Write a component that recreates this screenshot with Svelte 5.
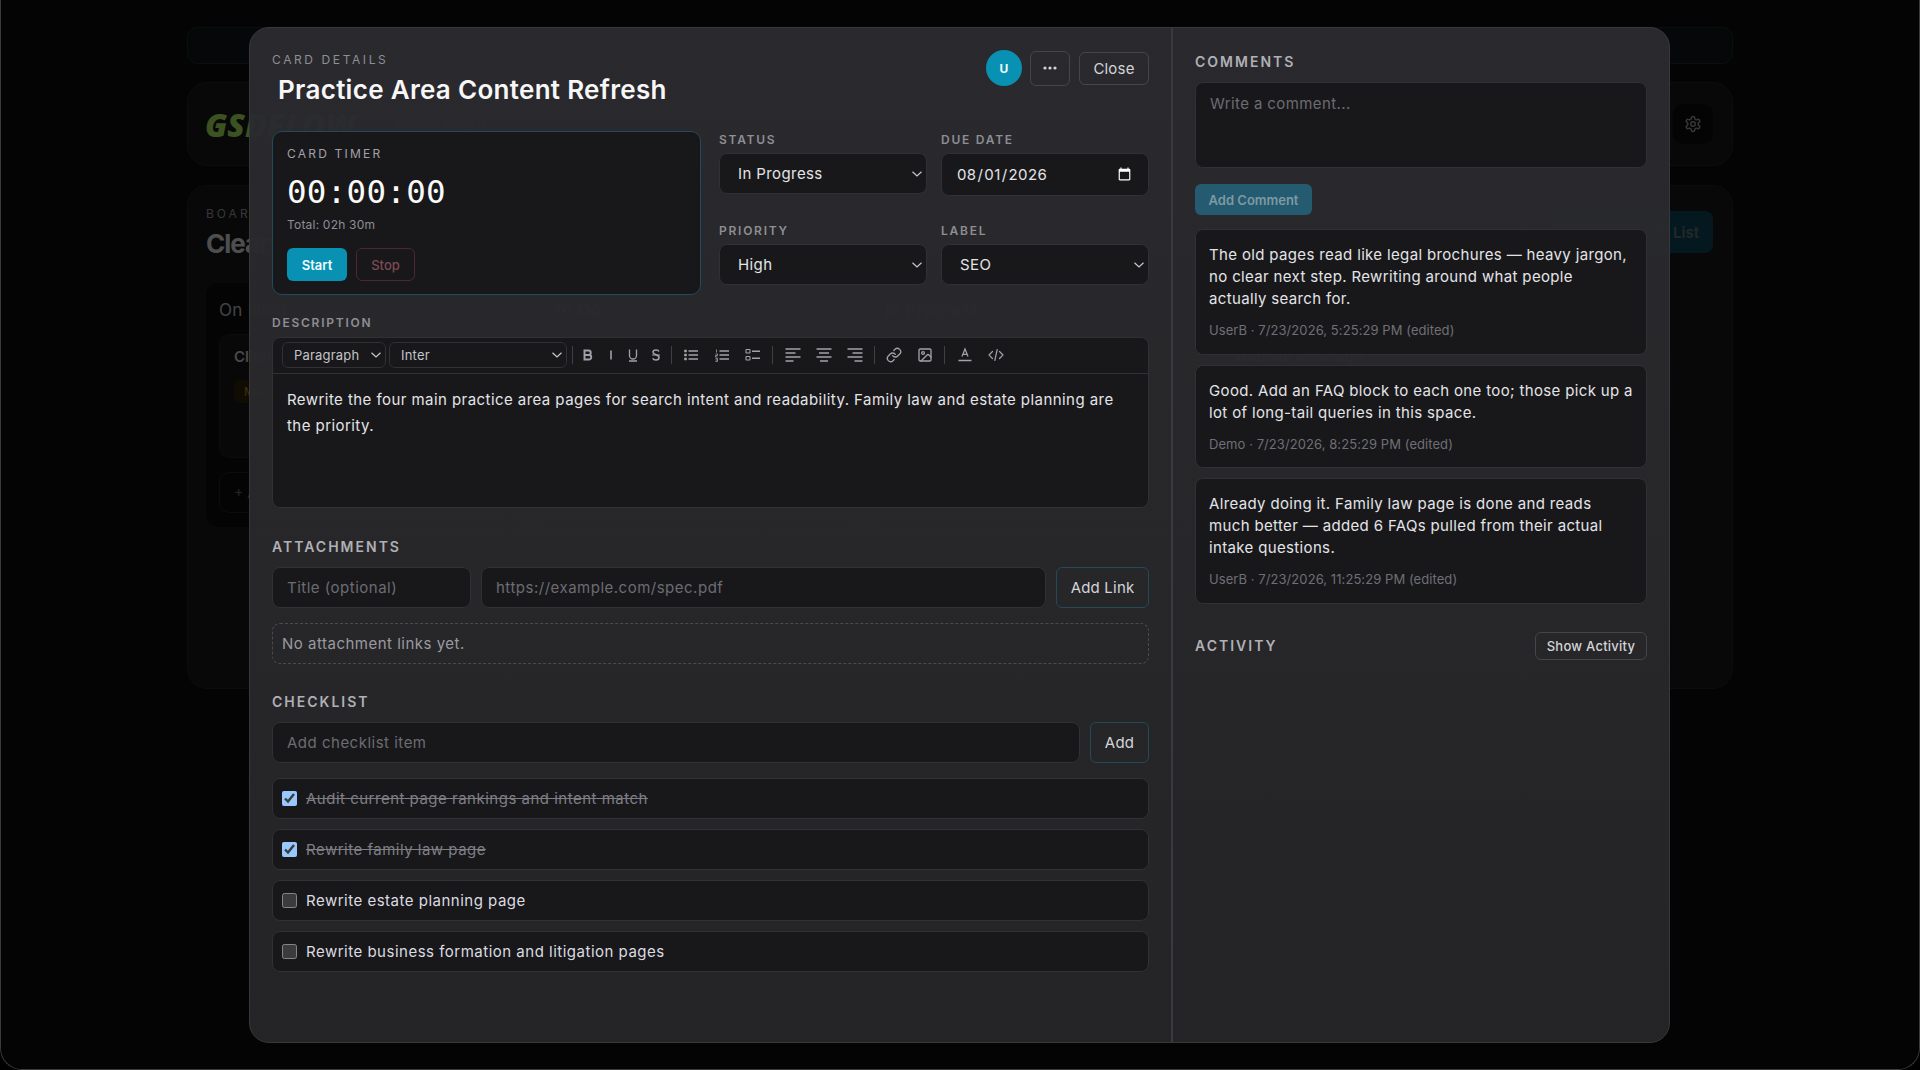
<script>
  const items = [
    { text: 'Audit current page rankings and intent match', done: true },
    { text: 'Rewrite family law page', done: true },
    { text: 'Rewrite estate planning page', done: false },
    { text: 'Rewrite business formation and litigation pages', done: false }
  ];
  const comments = [
    { text: 'The old pages read like legal brochures — heavy jargon, no clear next step. Rewriting around what people actually search for.', meta: 'UserB · 7/23/2026, 5:25:29 PM (edited)' },
    { text: 'Good. Add an FAQ block to each one too; those pick up a lot of long-tail queries in this space.', meta: 'Demo · 7/23/2026, 8:25:29 PM (edited)' },
    { text: 'Already doing it. Family law page is done and reads much better — added 6 FAQs pulled from their actual intake questions.', meta: 'UserB · 7/23/2026, 11:25:29 PM (edited)' }
  ];
  const columns = [
    { name: 'On Hold', cards: [{ title: 'Client Intake Forms', tag: 'Medium' }] },
    { name: 'To Do', cards: [{ title: 'Practice Area Content', tag: 'High' }] },
    { name: 'In Progress', cards: [{ title: 'Practice Area Content', tag: 'High' }] },
    { name: 'Done', cards: [{ title: 'Website Redesign', tag: 'Low' }] }
  ];
</script>

<div class="frame">
  <div class="page">
    <div class="banner"></div>
    <header class="topbar">
      <span class="logo">GSDFLOW</span>
      <span class="select-board">Select Board</span>
      <span class="gear">
        <svg width="18" height="18" viewBox="0 0 24 24" fill="none" stroke="currentColor" stroke-width="2" stroke-linecap="round" stroke-linejoin="round"><path d="M12.22 2h-.44a2 2 0 0 0-2 2v.18a2 2 0 0 1-1 1.73l-.43.25a2 2 0 0 1-2 0l-.15-.08a2 2 0 0 0-2.73.73l-.22.38a2 2 0 0 0 .73 2.73l.15.1a2 2 0 0 1 1 1.72v.51a2 2 0 0 1-1 1.74l-.15.09a2 2 0 0 0-.73 2.73l.22.38a2 2 0 0 0 2.73.73l.15-.08a2 2 0 0 1 2 0l.43.25a2 2 0 0 1 1 1.73V20a2 2 0 0 0 2 2h.44a2 2 0 0 0 2-2v-.18a2 2 0 0 1 1-1.73l.43-.25a2 2 0 0 1 2 0l.15.08a2 2 0 0 0 2.73-.73l.22-.39a2 2 0 0 0-.73-2.73l-.15-.08a2 2 0 0 1-1-1.74v-.5a2 2 0 0 1 1-1.74l.15-.09a2 2 0 0 0 .73-2.73l-.22-.38a2 2 0 0 0-2.73-.73l-.15.08a2 2 0 0 1-2 0l-.43-.25a2 2 0 0 1-1-1.73V4a2 2 0 0 0-2-2z"/><circle cx="12" cy="12" r="3"/></svg>
      </span>
    </header>
    <section class="board">
      <div class="board-head">
        <div>
          <div class="board-eyebrow">BOARD</div>
          <div class="board-name">Clearview Law</div>
        </div>
        <span class="add-list">+ Add List</span>
      </div>
      <div class="columns">
        {#each columns as col}
          <div class="column">
            <div class="col-name">{col.name}</div>
            {#each col.cards as c}
              <div class="bg-card">
                <div class="bg-title">{c.title}</div>
                <span class="bg-tag">{c.tag}</span>
              </div>
            {/each}
            <div class="bg-add">+ Add a card</div>
          </div>
        {/each}
      </div>
    </section>
  </div>

  <div class="overlay">
    <div class="modal">
      <div class="left">
        <div class="head">
          <div>
            <div class="eyebrow">CARD DETAILS</div>
            <h1>Practice Area Content Refresh</h1>
          </div>
          <div class="actions">
            <span class="avatar">U</span>
            <button class="btn more" aria-label="More">
              <svg width="14" height="14" viewBox="0 0 14 14" fill="currentColor"><circle cx="2" cy="7" r="1.6"/><circle cx="7" cy="7" r="1.6"/><circle cx="12" cy="7" r="1.6"/></svg>
            </button>
            <button class="btn close">Close</button>
          </div>
        </div>

        <div class="top-grid">
          <div class="timer">
            <div class="timer-label">CARD TIMER</div>
            <div class="clock">00:00:00</div>
            <div class="total">Total: 02h 30m</div>
            <div class="timer-btns">
              <button class="start">Start</button>
              <button class="stop">Stop</button>
            </div>
          </div>
          <div class="fields">
            <label class="field">
              <span class="field-label">STATUS</span>
              <select class="sel"><option>In Progress</option></select>
            </label>
            <label class="field">
              <span class="field-label">DUE DATE</span>
              <input class="date" type="date" value="2026-08-01" />
            </label>
            <label class="field">
              <span class="field-label">PRIORITY</span>
              <select class="sel"><option>High</option></select>
            </label>
            <label class="field">
              <span class="field-label">LABEL</span>
              <select class="sel"><option>SEO</option></select>
            </label>
          </div>
        </div>

        <div class="field-label desc-label">DESCRIPTION</div>
        <div class="editor">
          <div class="toolbar">
            <select class="tsel para"><option>Paragraph</option></select>
            <select class="tsel fam"><option>Inter</option></select>
            <span class="sep first"></span>
            <span class="tool tn"><svg width="16" height="16" viewBox="0 0 16 16" fill="none" stroke="currentColor" stroke-width="1.9"><path d="M4.500 3.500h4a2.200 2.200 0 0 1 0 4.500h-4zM4.500 8h4.500a2.250 2.250 0 0 1 0 4.500H4.500zM3.500 3.500h2M3.500 12.500h2"/></svg></span>
            <span class="tool tn"><svg width="16" height="16" viewBox="0 0 16 16" fill="none" stroke="currentColor" stroke-width="1.600"><path d="M8 3.500v9"/></svg></span>
            <span class="tool tn"><svg width="16" height="16" viewBox="0 0 16 16" fill="none" stroke="currentColor" stroke-width="1.300"><path d="M4.500 2.500v6a3.500 3.500 0 0 0 7 0v-6"/><path d="M4 14h8"/></svg></span>
            <span class="tool tn"><svg width="16" height="16" viewBox="0 0 16 16" fill="none" stroke="currentColor" stroke-width="1.500"><path d="M11 4.500C10.600 3.500 9.500 3 8 3 6.200 3 5 3.900 5 5.200c0 2.800 6 2.200 6 5.300C11 12 9.800 13 8 13c-1.700 0-2.800-.6-3.200-1.800"/><path d="M4 8h8" stroke-width="1.200"/></svg></span>
            <span class="sep"></span>
            <span class="tool"><svg width="16" height="16" viewBox="0 0 16 16" fill="none" stroke="currentColor" stroke-width="1.500"><path d="M5.500 4h9.500M5.500 8h9.500M5.500 12h9.500"/><path d="M1.500 3h2v2h-2zM1.500 7h2v2h-2zM1.500 11h2v2h-2z" fill="currentColor" stroke-width=".6"/></svg></span>
            <span class="tool"><svg width="16" height="16" viewBox="0 0 16 16" fill="none" stroke="currentColor" stroke-width="1.500"><path d="M5.500 4h9.500M5.500 8h9.500M5.500 12h9.500"/><path d="M2.500 2.500v3M1.500 7h2v1.500h-2V10h2M1.500 11.500h2v3h-2M1.500 13h2" stroke-width=".8"/></svg></span>
            <span class="tool"><svg width="16" height="16" viewBox="0 0 16 16" fill="none" stroke="currentColor" stroke-width="1.100"><rect x="1" y="2.500" width="4" height="3.500" rx=".6"/><rect x="1" y="9.500" width="4" height="3.500" rx=".6"/><path d="M7 4.200h8M7 11.200h8" stroke-width="1.600"/></svg></span>
            <span class="sep"></span>
            <span class="tool"><svg width="16" height="16" viewBox="0 0 16 16" fill="none" stroke="currentColor" stroke-width="1.300"><path d="M.5 2h15M.5 6h10M.5 10h15M.5 14h8"/></svg></span>
            <span class="tool"><svg width="16" height="16" viewBox="0 0 16 16" fill="none" stroke="currentColor" stroke-width="1.300"><path d="M.5 2h15M3 6h10M.5 10h15M4 14h8"/></svg></span>
            <span class="tool"><svg width="16" height="16" viewBox="0 0 16 16" fill="none" stroke="currentColor" stroke-width="1.300"><path d="M.5 2h15M5.500 6h10M.5 10h15M7.500 14h8"/></svg></span>
            <span class="sep"></span>
            <span class="tool"><svg width="16" height="16" viewBox="0 0 24 24" fill="none" stroke="currentColor" stroke-width="2" stroke-linecap="round" stroke-linejoin="round"><path d="M10 13a5 5 0 0 0 7.540.54l3-3a5 5 0 0 0-7.070-7.070l-1.720 1.710"/><path d="M14 11a5 5 0 0 0-7.540-.54l-3 3a5 5 0 0 0 7.070 7.070l1.710-1.710"/></svg></span>
            <span class="tool"><svg width="16" height="16" viewBox="0 0 24 24" fill="none" stroke="currentColor" stroke-width="2" stroke-linecap="round" stroke-linejoin="round"><rect x="3" y="3" width="18" height="18" rx="2"/><circle cx="9" cy="9" r="2"/><path d="m21 15-3.090-3.090a2 2 0 0 0-2.820 0L6 21"/></svg></span>
            <span class="sep"></span>
            <span class="tool"><svg width="16" height="16" viewBox="0 0 16 16" fill="none" stroke="currentColor"><path d="M5 9.500 8 2l3 7.500M6 7.300h4" stroke-width="1.300"/><path d="M1.500 13.500h13" stroke-width="1.400"/></svg></span>
            <span class="tool"><svg width="16" height="16" viewBox="0 0 16 16" fill="none" stroke="currentColor" stroke-width="1.200" stroke-linecap="round" stroke-linejoin="round"><path d="M4.500 4.500 1 8l3.500 3.500M11.500 4.500 15 8l-3.500 3.500M9.200 2.500l-2.400 11"/></svg></span>
          </div>
          <div class="editor-body">Rewrite the four main practice area pages for search intent and readability. Family law and estate planning are the priority.</div>
        </div>

        <h2 class="section att">ATTACHMENTS</h2>
        <div class="row">
          <input class="inp title-inp" placeholder="Title (optional)" />
          <input class="inp grow" placeholder="https://example.com/spec.pdf" />
          <button class="btn add-link">Add Link</button>
        </div>
        <div class="empty">No attachment links yet.</div>

        <h2 class="section chk">CHECKLIST</h2>
        <div class="row checkrow">
          <input class="inp grow" placeholder="Add checklist item" />
          <button class="btn add-item">Add</button>
        </div>
        <div class="items">
          {#each items as item}
            <label class="item">
              <input type="checkbox" checked={item.done} />
              <span class:done={item.done}>{item.text}</span>
            </label>
          {/each}
        </div>
      </div>

      <aside class="right">
        <h2 class="section com">COMMENTS</h2>
        <textarea class="comment-box" placeholder="Write a comment..."></textarea>
        <button class="add-comment">Add Comment</button>
        <div class="comments">
          {#each comments as c}
            <article class="comment">
              <p>{c.text}</p>
              <div class="meta">{c.meta}</div>
            </article>
          {/each}
        </div>
        <div class="activity">
          <h2 class="section">ACTIVITY</h2>
          <button class="btn show">Show Activity</button>
        </div>
      </aside>
    </div>
  </div>
</div>

<style>
  :global(body) {
    margin: 0;
    background: #000;
    font-family: Inter, "Liberation Sans", sans-serif;
    color-scheme: dark;
  }
  * { box-sizing: border-box; }

  .frame {
    position: relative;
    width: 1920px;
    height: 1070px;
    overflow: hidden;
    background: #0e0e0f;
    border: 1px solid #3a3a3a;
    border-top: 0;
    border-radius: 0 0 22px 22px;
  }

  /* dimmed page behind the dialog */
  .page {
    padding: 27px 186px 0;
    display: flex;
    flex-direction: column;
    color: #f4f4f5;
  }
  .banner {
    height: 37px;
    border: 1px solid #123030;
    background: #141618;
    border-radius: 10px;
    margin-bottom: 18px;
  }
  .topbar {
    height: 84px;
    border: 1px solid #232326;
    background: #18181b;
    border-radius: 20px;
    margin-bottom: 19px;
    padding: 0 19px 0 17px;
    display: flex;
    align-items: center;
    gap: 40px;
  }
  .logo {
    font-family: "Open Sans", sans-serif;
    font-size: 32px;
    font-weight: 800;
    font-style: italic;
    color: #b0f060;
  }
  .select-board { font-size: 15px; color: #a1a1aa; }
  .gear {
    margin-left: auto;
    width: 40px;
    height: 40px;
    border-radius: 10px;
    background: #0e0e0f;
    display: flex;
    align-items: center;
    justify-content: center;
    color: #a1a1aa;
  }
  .board {
    height: 504px;
    border: 1px solid #232326;
    background: #18181b;
    border-radius: 20px;
    padding: 20px 19px 20px 18px;
  }
  .board-head { display: flex; justify-content: space-between; align-items: flex-start; }
  .board-eyebrow { font-size: 12px; letter-spacing: 3px; line-height: 16px; color: #a1a1aa; }
  .board-name { font-size: 26px; font-weight: 700; letter-spacing: -1px; margin-top: 6px; color: #e4e4e7; }
  .add-list {
    width: 160px;
    height: 42px;
    margin-top: 5px;
    border-radius: 8px;
    background: #0e4a5c;
    color: #71717a;
    font-size: 15px;
    font-weight: 600;
    display: flex;
    align-items: center;
    justify-content: flex-end;
    padding-right: 14px;
  }
  .columns { display: flex; gap: 13px; margin-top: 24px; }
  .column {
    width: 320px;
    height: 244px;
    background: #0e0e0f;
    border-radius: 12px;
    padding: 17px 13px 14px;
  }
  .col-name { font-size: 17px; line-height: 20px; letter-spacing: .3px; color: #c4c4c8; margin-bottom: 14px; }
  .bg-card { height: 124px; border: 1px solid #232326; background: #18181b; border-radius: 10px; padding: 12px 14px; }
  .bg-title { font-size: 15px; color: #d4d4d8; font-weight: 600; margin-bottom: 14px; }
  .bg-tag { background: #33240a; color: #b98a20; font-size: 12px; padding: 4px 10px; border-radius: 5px; }
  .bg-add { height: 41px; margin-top: 14px; border: 1px solid #232326; border-radius: 10px; padding: 11px 14px; color: #71717a; font-size: 14px; }

  .overlay {
    position: absolute;
    inset: 0;
    background: rgba(0, 0, 0, 0.66);
    display: flex;
    justify-content: center;
    padding-top: 27px;
  }

  .modal {
    width: 1421px;
    height: 1016px;
    margin-left: -1px;
    display: grid;
    grid-template-columns: 923px 1fr;
    border: 1px solid #38383c;
    border-radius: 20px;
    background: linear-gradient(180deg, rgba(43, 43, 47, 0.97), rgba(37, 37, 39, 0.98));
    color: #e4e4e7;
    overflow: hidden;
  }

  .left {
    padding: 22px 22px 0;
    border-right: 2px solid #3a3a3e;
    min-width: 0;
  }
  .right { padding: 24px 22px 0; min-width: 0; display: flex; flex-direction: column; }

  .head { display: flex; justify-content: space-between; align-items: flex-start; height: 62px; margin-bottom: 19px; }
  .eyebrow { font-size: 12px; line-height: 18px; letter-spacing: 2.600px; color: #8e8e94; padding-top: 1px; height: 18px; }
  h1 {
    margin: 0 0 0 6px;
    font-size: 26px;
    line-height: 44px;
    font-weight: 600;
    letter-spacing: .3px;
    color: #f7f7f8;
    white-space: nowrap;
  }
  .actions { display: flex; align-items: center; gap: 9px; }
  .avatar {
    width: 36px;
    height: 36px;
    margin-right: -1px;
    border-radius: 50%;
    background: #0891b2;
    color: #ecfeff;
    font-size: 12px;
    font-weight: 700;
    display: flex;
    align-items: center;
    justify-content: center;
  }
  .btn {
    background: transparent;
    border: 1px solid #45454a;
    border-radius: 6px;
    color: #d4d4d8;
    font-family: inherit;
    font-size: 15px;
    letter-spacing: .2px;
    padding: 0;
    display: flex;
    align-items: center;
    justify-content: center;
  }
  .more { width: 40px; height: 35px; }
  .close { width: 70px; height: 33px; }

  .top-grid { display: grid; grid-template-columns: 429px 1fr; gap: 18px; margin-bottom: 19px; }
  .timer {
    height: 164px;
    border: 1px solid #1f4c5c;
    background: #18181b;
    border-radius: 10px;
    padding: 14px;
  }
  .timer-label { font-size: 12px; line-height: 16px; letter-spacing: 2.200px; color: #a1a1aa; }
  .clock {
    font-family: "DejaVu Sans Mono", "Liberation Mono", monospace;
    font-size: 32.500px;
    line-height: 40px;
    letter-spacing: .3px;
    margin-top: 10px;
    color: #fafafa;
  }
  .total { font-size: 12px; line-height: 16px; letter-spacing: .2px; margin-top: 5px; color: #8e8e94; }
  .timer-btns { display: flex; gap: 9px; margin-top: 15px; }
  .start, .stop { height: 33px; font-family: inherit; font-size: 13px; border-radius: 6px; padding: 0; }
  .start { width: 60px; background: #0891b2; color: #f0fdff; border: 0; font-weight: 600; }
  .stop { width: 59px; background: transparent; color: #7c4a55; border: 1px solid #4c2730; font-weight: 500; }

  .fields { display: grid; grid-template-columns: 208px 208px; column-gap: 14px; row-gap: 26px; align-content: start; }
  .field { display: flex; flex-direction: column; gap: 5px; }
  .field-label { font-size: 12px; line-height: 16px; padding-top: 1px; height: 17px; font-weight: 600; letter-spacing: 1.750px; color: #8e8e94; }
  .sel, .date, .inp, .comment-box {
    background-color: #18181b;
    border: 1px solid #303035;
    border-radius: 8px;
    color: #e4e4e7;
    font-family: inherit;
    font-size: 15px;
    letter-spacing: .4px;
    outline: none;
  }
  .sel, .tsel {
    appearance: none;
    background-image: url("data:image/svg+xml,%3Csvg xmlns='http://www.w3.org/2000/svg' width='10' height='6' viewBox='0 0 10 6' fill='none' stroke='%23c8c8cc' stroke-width='1.2'%3E%3Cpath d='M.5.8 5 5 9.500.8'/%3E%3C/svg%3E");
    background-repeat: no-repeat;
    background-position: right 4px center;
    background-size: 10px 6px;
  }
  .sel { height: 41px; padding: 0 14px 0 18px; }
  .date { height: 43px; padding: 0 14px; }

  .desc-label { margin-bottom: 6px; }
  .editor {
    height: 171px;
    border: 1px solid #303035;
    border-radius: 8px;
    background: #18181b;
    overflow: hidden;
  }
  .toolbar {
    height: 36px;
    border-bottom: 1px solid #303035;
    display: flex;
    align-items: center;
    padding: 0 0 1px 9px;
    color: #a1a1aa;
  }
  .tsel {
    height: 26px;
    background-color: #18181b;
    border: 1px solid #303035;
    border-radius: 6px;
    color: #c4c4c8;
    font-family: inherit;
    font-size: 13px;
    letter-spacing: .2px;
    padding: 0 11px;
    margin-right: 3px;
  }
  .para { width: 104px; }
  .fam { width: 178px; }
  .sep { width: 1px; height: 18px; background: #3f3f44; margin: 0 4px 0 3.500px; flex: none; }
  .sep.first { margin-left: 2px; }
  .tool { width: 31px; height: 24px; display: flex; align-items: center; justify-content: center; flex: none; }
  .tool.tn { width: 22.500px; }
  .editor-body { padding: 13px 14px; font-size: 15px; line-height: 25.500px; letter-spacing: .44px; color: #e4e4e7; }

  .section {
    margin: 0;
    font-size: 14px;
    line-height: 20px;
    font-weight: 600;
    letter-spacing: 2px;
    color: #b0b0b6;
  }
  .att { margin-top: 28px; margin-bottom: 9px; line-height: 22px; }
  .chk { margin-top: 28px; margin-bottom: 10px; }
  .com { margin-bottom: 10px; }

  .row { display: flex; gap: 10px; }
  .inp { height: 41px; padding: 0 14px; }
  .inp::placeholder, .comment-box::placeholder { color: #6c6c72; opacity: 1; letter-spacing: .5px; }
  .title-inp { width: 199px; }
  .grow { flex: 1; min-width: 0; }
  .add-link { width: 93px; height: 41px; border-color: #224a58; }
  .add-item { width: 59px; height: 41px; border-color: #224a58; }
  .empty {
    height: 41px;
    margin-top: 15px;
    border: 1px dashed #4a4a50;
    border-radius: 8px;
    padding: 0 9px;
    display: flex;
    align-items: center;
    color: #9a9aa0;
    font-size: 15px;
    letter-spacing: .5px;
  }

  .items { display: flex; flex-direction: column; gap: 10px; margin-top: 15px; }
  .item {
    height: 41px;
    border: 1px solid #303035;
    border-radius: 8px;
    background: #18181b;
    display: flex;
    align-items: center;
    gap: 9px;
    padding-left: 9px;
    font-size: 15px;
    letter-spacing: .5px;
    color: #dcdce0;
  }
  .item input { width: 15px; height: 15px; margin: 0; }
  .done { text-decoration: line-through; color: #7e7e84; }

  .comment-box {
    display: block;
    width: 100%;
    height: 86px;
    padding: 11px 14px;
    resize: none;
  }
  .comment-box::placeholder { letter-spacing: .4px; }
  .add-comment {
    align-self: flex-start;
    margin-top: 16px;
    margin-bottom: 14px;
    width: 117px;
    height: 31px;
    border: 0;
    border-radius: 6px;
    background: #245b70;
    color: #7f99a3;
    font-family: inherit;
    font-size: 13px;
    font-weight: 600;
    padding: 0;
  }
  .comments { display: flex; flex-direction: column; gap: 10px; }
  .comment {
    border: 1px solid #303035;
    border-radius: 8px;
    background: #18181b;
    padding: 14px 13px 14.500px;
  }
  .comment p { margin: 0; font-size: 15px; line-height: 22px; letter-spacing: .35px; color: #e4e4e7; }
  .meta { margin-top: 11px; font-size: 13px; line-height: 18px; letter-spacing: .07px; color: #6f6f75; }
  .activity { display: flex; justify-content: space-between; align-items: center; margin-top: 28px; }
  .show { width: 112px; height: 28px; font-size: 13px; font-weight: 500; letter-spacing: .25px; }
</style>
